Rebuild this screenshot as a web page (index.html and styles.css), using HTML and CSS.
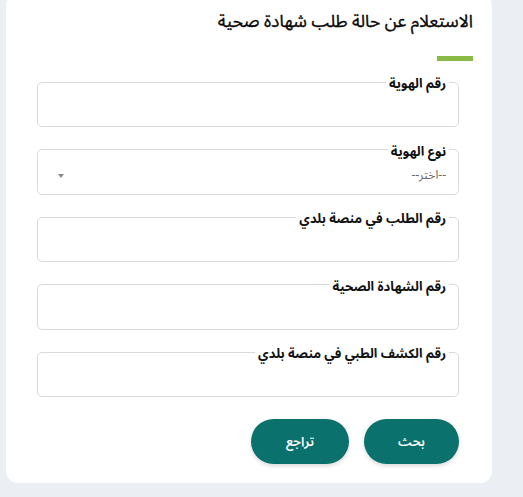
FILE: index.html
```html
<!DOCTYPE html>
<html lang="ar" dir="rtl">
<head>
<meta charset="utf-8">
<link rel="stylesheet" href="styles.css">
</head>
<body>
<main class="card">
  <header class="head">
    <h1 class="title">الاستعلام عن حالة طلب شهادة صحية</h1>
    <div class="accent"></div>
  </header>
  <form class="form">
    <fieldset class="field">
      <legend class="label">رقم الهوية</legend>
      <input class="control" type="text">
    </fieldset>
    <fieldset class="field">
      <legend class="label">نوع الهوية</legend>
      <div class="control select">
        <span class="placeholder">--اختر--</span>
        <span class="caret"></span>
      </div>
    </fieldset>
    <fieldset class="field">
      <legend class="label">رقم الطلب في منصة بلدي</legend>
      <input class="control" type="text">
    </fieldset>
    <fieldset class="field">
      <legend class="label">رقم الشهادة الصحية</legend>
      <input class="control" type="text">
    </fieldset>
    <fieldset class="field">
      <legend class="label">رقم الكشف الطبي في منصة بلدي</legend>
      <input class="control" type="text">
    </fieldset>
    <div class="actions">
      <button class="btn btn-search" type="button">بحث</button>
      <button class="btn btn-back" type="button">تراجع</button>
    </div>
  </form>
</main>
</body>
</html>
```
FILE: styles.css
```css
* { box-sizing: border-box; }
html, body {
  margin: 0;
  padding: 0;
  background: #ebeef3;
  height: 100%;
}
body {
  font-family: "Noto Sans Arabic", "Noto Sans Arabic UI", "Noto Kufi Arabic", "Noto Sans", "DejaVu Sans", sans-serif;
  color: #111;
}
.card {
  margin: -6px 31px 0 0;
  width: 486px;
  background: #fff;
  border-radius: 12px;
  padding: 0 33px 19px 31px;
}
.head {
  padding-top: 14px;
  margin-right: -14px;
  display: flex;
  flex-direction: column;
  align-items: flex-start;
}
.title {
  margin: 0;
  font-size: 17.4px;
  font-weight: 400;
  line-height: 28px;
  color: #0a0a0a;
  -webkit-text-stroke: 0.35px #0a0a0a;
}
.accent {
  margin-top: 20px;
  width: 36px;
  height: 5px;
  background: #8aba46;
}
.form {
  margin-top: 11px;
  display: flex;
  flex-direction: column;
  gap: 12.5px;
}
.field {
  margin: 0;
  padding: 0 9px;
  border: 1px solid #d9d9d9;
  border-radius: 5px;
  min-width: 0;
}
.label {
  padding: 5px 3px 0;
  font-size: 13px;
  font-weight: 700;
  line-height: 15px;
  color: #111;
}
.control {
  display: block;
  width: 100%;
  height: 34px;
  border: 0;
  outline: 0;
  background: transparent;
  font: inherit;
  padding: 0;
}
.select {
  display: flex;
  align-items: center;
  justify-content: space-between;
  padding: 0 3px 2px 0;
}
.placeholder {
  font-size: 12px;
  line-height: 12px;
  color: #666;
}
.caret {
  margin-left: 11px;
  width: 0;
  height: 0;
  border-left: 3px solid transparent;
  border-right: 3px solid transparent;
  border-top: 4px solid #888;
}
.actions {
  margin-top: 9.5px;
  display: flex;
  gap: 15px;
}
.btn {
  height: 45px;
  border: 0;
  border-radius: 23px;
  background: #0a716c;
  color: #fff;
  font-family: inherit;
  font-size: 13px;
  font-weight: 600;
  box-shadow: 0 2px 4px rgba(0,0,0,0.15);
}
.btn-search { width: 95px; }
.btn-back { width: 98px; }
```
